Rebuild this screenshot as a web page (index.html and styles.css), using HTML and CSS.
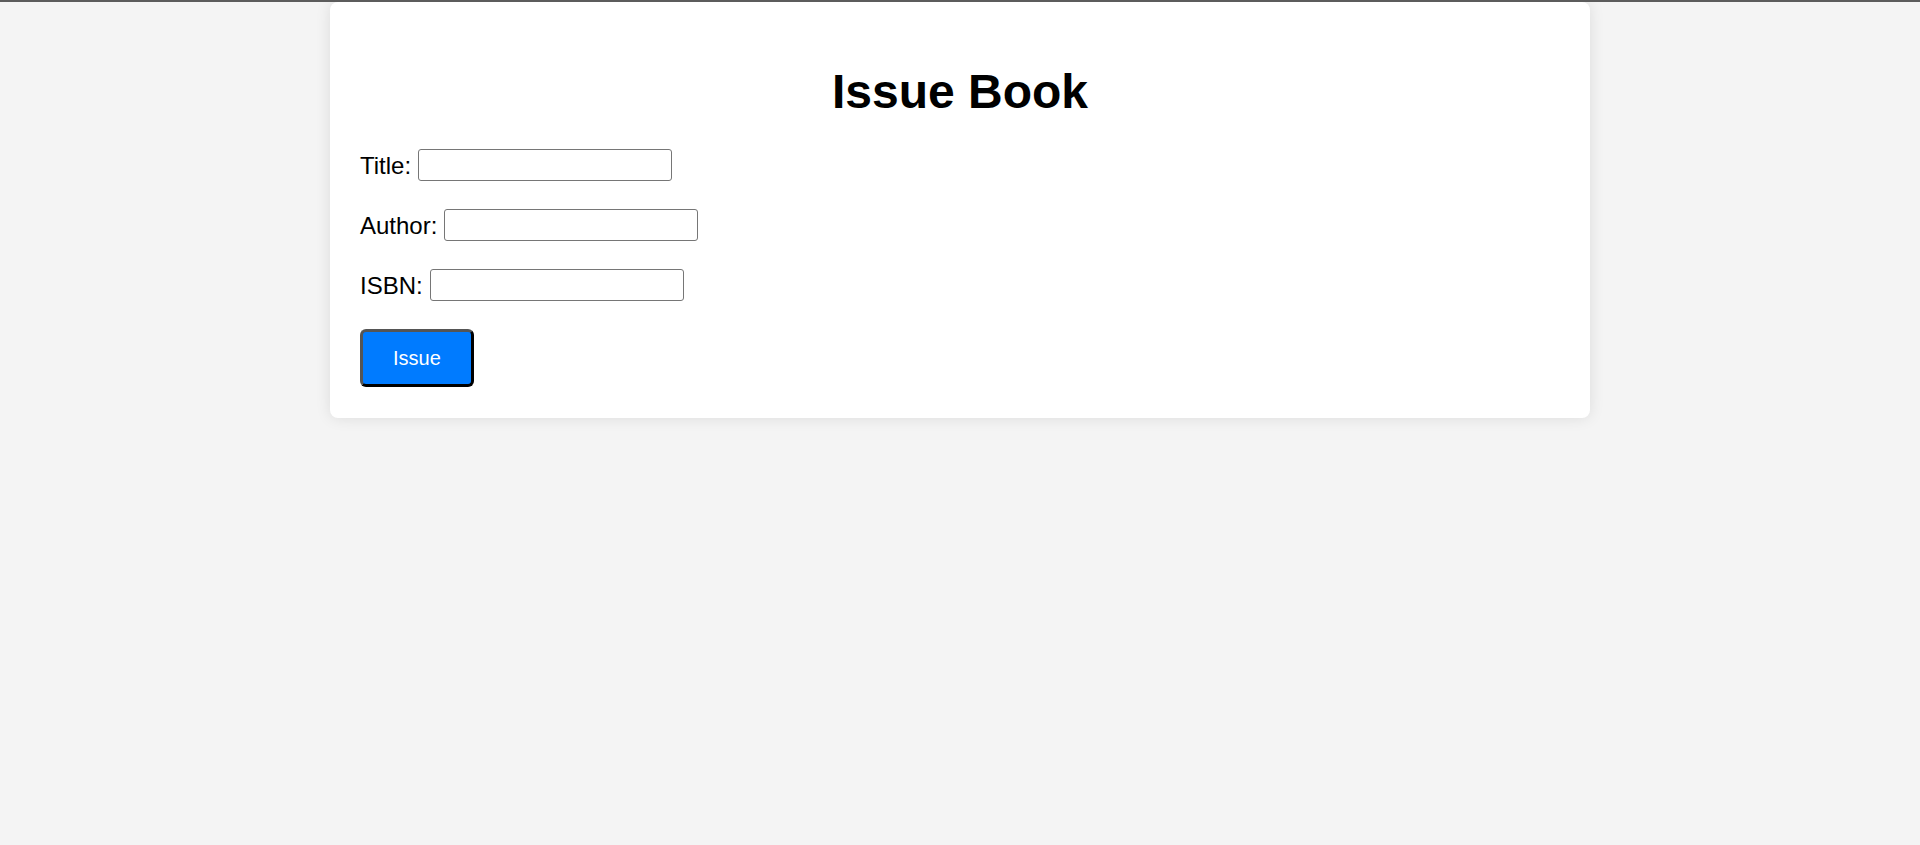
FILE: index.html
```html
<!DOCTYPE html>
<html lang="en">
<head>
<meta charset="utf-8">
<title>Issue Book</title>
<link rel="stylesheet" href="styles.css">
</head>
<body>
<div class="card">
  <h1 class="title">Issue Book</h1>
  <form class="form">
    <div class="row"><label for="t">Title:</label><input id="t" class="field" type="text"></div>
    <div class="row"><label for="a">Author:</label><input id="a" class="field" type="text"></div>
    <div class="row"><label for="i">ISBN:</label><input id="i" class="field" type="text"></div>
    <div class="actions"><button type="button" class="btn">Issue</button></div>
  </form>
</div>
</body>
</html>
```
FILE: styles.css
```css
html, body {
  margin: 0;
  padding: 0;
}
body {
  background: #f4f4f4;
  border-top: 2px solid #5c5c5c;
  font-family: "Liberation Sans", Arial, sans-serif;
  font-size: 24px;
  color: #000;
  min-height: 843px;
  box-sizing: border-box;
}
.card {
  max-width: 1200px;
  margin: 0 auto;
  padding: 30px;
  background: #fff;
  border-radius: 8px;
  box-shadow: 0 0 15px rgba(0, 0, 0, 0.1);
}
.title {
  font-size: 48px;
  line-height: 56px;
  font-weight: bold;
  text-align: center;
  margin: 32px 0 29px;
}
.form {
  display: flex;
  flex-direction: column;
  gap: 28px;
  margin: 0 0 1px;
}
.row {
  display: flex;
  align-items: center;
  gap: 7px;
  height: 32px;
}
.row label {
  line-height: 27px;
}
.field {
  box-sizing: border-box;
  width: 254px;
  height: 32px;
  border: 1px solid #767676;
  border-radius: 3px;
  padding: 1px 3px;
  font-family: "Liberation Sans", Arial, sans-serif;
  font-size: 20px;
  background: #fff;
}
.actions {
  display: flex;
}
.btn {
  box-sizing: border-box;
  height: 58px;
  padding: 15px 30px;
  font-family: "Liberation Sans", Arial, sans-serif;
  font-size: 20px;
  line-height: 22px;
  color: #fff;
  background: #007bff;
  border: 3px solid;
  border-color: #555 #000 #000 #555;
  border-radius: 6px;
  cursor: pointer;
}
```
